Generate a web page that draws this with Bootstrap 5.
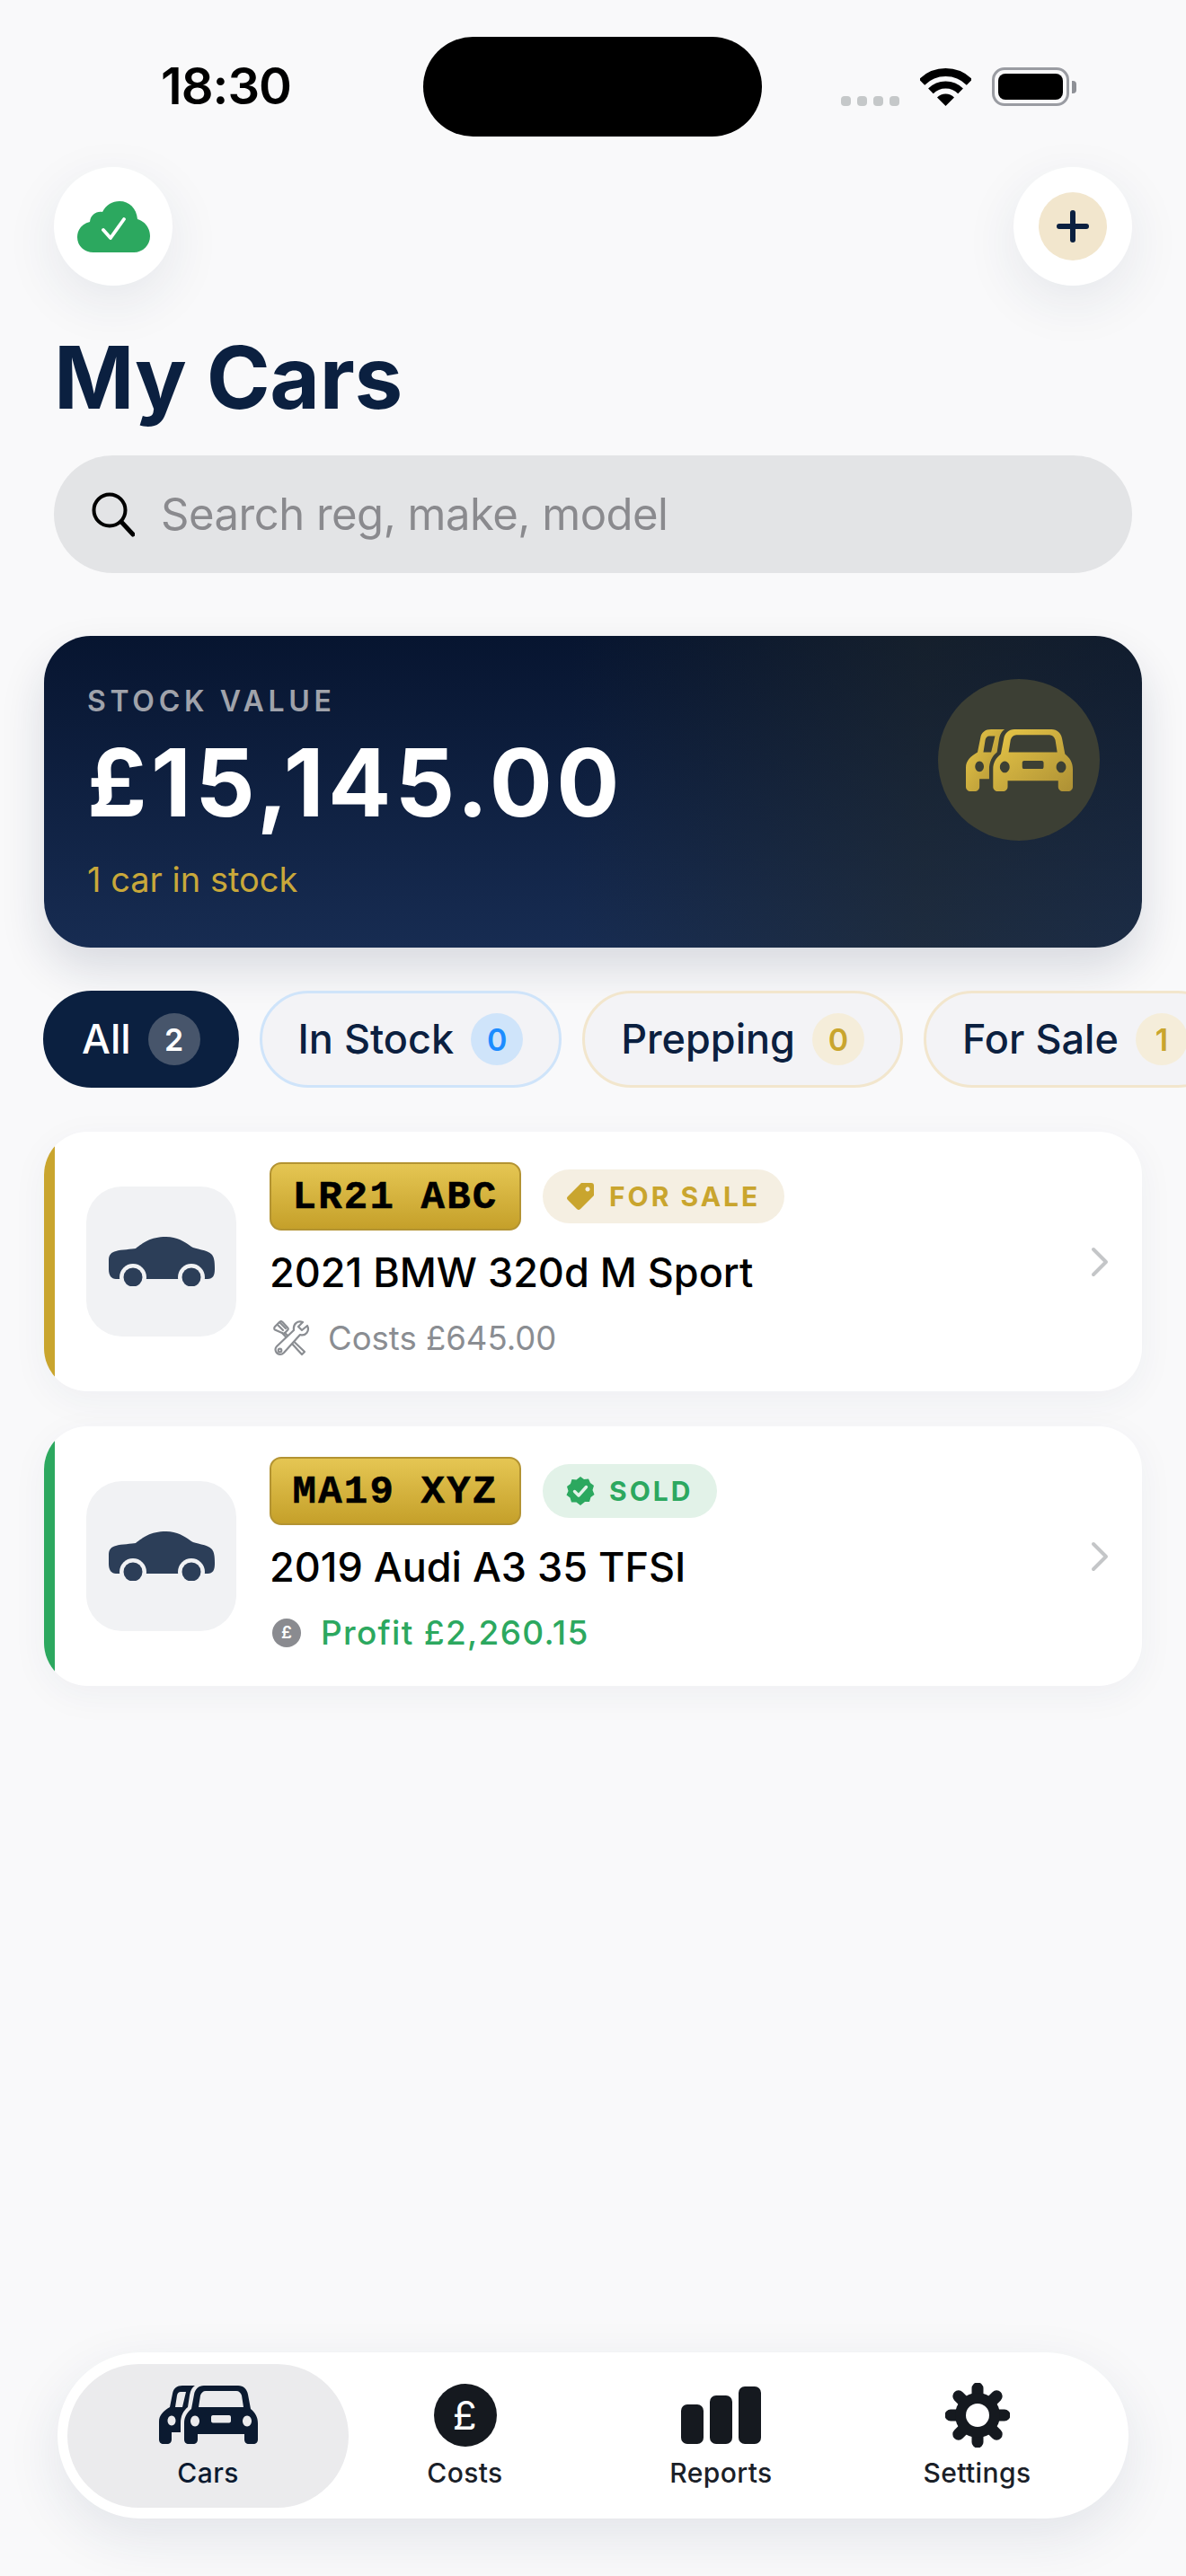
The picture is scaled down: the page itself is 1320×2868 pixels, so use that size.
<!DOCTYPE html>
<html lang="en">
<head>
    <meta charset="UTF-8">
    <meta name="viewport" content="width=device-width, initial-scale=1.0">
    <title>My Cars</title>
    <link rel="stylesheet" href="https://cdn.jsdelivr.net/npm/bootstrap@5.3.0/dist/css/bootstrap.min.css">
    <style>
        body {
            background-color: #f9f9fa;
            font-family: Inter, "Liberation Sans", sans-serif;
            color: #0b2040;
        }
        .app-shell { min-height: 2868px; overflow: hidden; }

        /* status bar */
        .status-row { padding: 41px 122px 0 179px; height: 152px; }
        .status-time { width: 292px; font-size: 56px; font-weight: 600; color: #000; line-height: 111px; letter-spacing: -1px; }
        .status-island { width: 377px; height: 111px; background: #000; border-radius: 56px; }
        .status-right { height: 77px; gap: 23px; }
        .signal-dots { gap: 7px; }
        .signal-dots span { width: 11px; height: 11px; border-radius: 4px; background: #c5c8c9; }
        .batt-shell { width: 86px; height: 43px; border: 3px solid #9a9ca2; border-radius: 14px; padding: 4px; }
        .batt-fill { height: 100%; background: #000; border-radius: 8px; }
        .batt-nub { width: 5px; height: 14px; background: #8e9096; border-radius: 0 4px 4px 0; margin-left: 3px; }

        /* header */
        .top-row { margin-top: 34px; padding: 0 60px; }
        .round-btn { width: 132px; height: 132px; background: #fff; box-shadow: 0 18px 60px rgba(30, 50, 90, .09); }
        .plus-disc { width: 76px; height: 76px; background: #f2e6cd; }
        .page-title { margin: 52px 0 37px; padding-left: 60px; font-size: 96px; line-height: 100px; font-weight: 700; letter-spacing: -.4px; color: #0b2040; }
        .search-box { margin: 0 60px; height: 131px; background: #e3e4e6; padding-left: 42px; gap: 29px; }
        .search-text { font-size: 49px; color: #8a8a8e; letter-spacing: -.5px; }

        /* stock value */
        .hero-panel {
            margin: 70px 49px 0;
            height: 347px;
            padding: 53px 47px 0 48px;
            border-radius: 52px;
            color: #fff;
            background:
                linear-gradient(90deg, rgba(38, 44, 40, 0) 48%, rgba(38, 44, 40, .45) 80%, rgba(38, 44, 40, .3) 100%),
                linear-gradient(180deg, #071530 0%, #172c52 100%);
            box-shadow: 0 24px 50px rgba(20, 35, 70, .14);
        }
        .hero-label { font-size: 32px; line-height: 40px; font-weight: 600; letter-spacing: 4.700px; color: #a0a3ab; }
        .hero-amount { margin-top: 15px; font-size: 104px; line-height: 110px; font-weight: 700; letter-spacing: 4.500px; }
        .hero-sub { margin-top: 30px; font-size: 38px; line-height: 46px; color: #c9a83a; }
        .hero-disc { width: 180px; height: 180px; margin-top: -5px; background: #3c3f34; }

        /* filter chips */
        .chip-row { margin: 48px 0 0 48px; gap: 23px; }
        .chip-item { height: 108px; padding: 0 40px; gap: 19px; background: #f3f3f6; border: 3px solid #f2e6cd; font-size: 45px; font-weight: 500; color: #0b2040; white-space: nowrap; }
        .chip-item.chip-all { background: #0b2040; border-color: #0b2040; color: #fff; }
        .chip-item.chip-blue { border-color: #cfe4fa; }
        .chip-num { width: 58px; height: 58px; font-size: 34px; font-weight: 600; background: #f5edda; color: #c9a52e; }
        .chip-all .chip-num { background: #47556b; color: #fff; }
        .chip-blue .chip-num { background: #cfe4fa; color: #1c8cff; }

        /* car rows */
        .car-list { margin: 49px 49px 0; gap: 39px; }
        .car-item { height: 289px; border: 0; border-radius: 48px; background: #fff; padding-right: 37px; box-shadow: 0 10px 40px rgba(30, 50, 90, .05); overflow: hidden; }
        .car-strip { width: 12px; align-self: stretch; flex-shrink: 0; margin-right: 35px; }
        .strip-gold { background: #c9a52e; }
        .strip-green { background: #2ca85f; }
        .car-thumb { width: 167px; height: 167px; background: #f1f2f4; border-radius: 40px; }
        .car-body { padding-top: 34px; margin-left: 37px; align-self: flex-start; }
        .plate-tag { width: 280px; height: 76px; padding-top: 2px; border: 2px solid #b39332; border-radius: 13px; background: linear-gradient(180deg, #e5c653 0%, #c5a02a 100%); font-family: "Liberation Mono", monospace; font-size: 44px; font-weight: 700; letter-spacing: 2.200px; color: #000; -webkit-text-stroke: .6px #000; }
        .state-tag { height: 60px; margin-left: 24px; padding: 0 27px 0 26px; gap: 16px; font-size: 30px; font-weight: 700; letter-spacing: 3px; }
        .state-sale { background: #f5efe2; color: #c9a52e; }
        .state-sold { background: #e2f2e8; color: #2ca85f; }
        .car-name { margin-top: 24px; font-size: 45px; line-height: 46px; font-weight: 500; color: #000; }
        .car-meta { margin-top: 30px; padding-left: 3px; height: 40px; gap: 20px; font-size: 36.500px; color: #8a8d92; }
        .car-meta.meta-profit { gap: 22px; font-size: 37px; color: #2ca85f; font-weight: 500; letter-spacing: 1.300px; }
        .coin-small { width: 32px; height: 32px; background: #8a8b90; color: #fff; font-size: 19px; font-weight: 600; letter-spacing: 0; }

        /* tab bar */
        .tab-bar { width: 1192px; height: 185px; margin: auto 64px 64px; padding: 0 26px 0 27px; background: #fff; box-shadow: 0 20px 60px rgba(30, 50, 90, .1); }
        .tab-item { width: 285px; height: 160px; gap: 10px; font-size: 30px; line-height: 36px; font-weight: 500; letter-spacing: .4px; color: #1a2028; text-decoration: none; }
        .tab-item.tab-on { width: 313px; margin: 0 -13px 0 -16px; background: #ebebed; color: #0b1a30; }
        .tab-ico { height: 72px; }
        .coin-large { width: 70px; height: 70px; background: #15191f; color: #fff; font-size: 44px; font-weight: 400; }
        .bar-set { gap: 7px; height: 65px; }
        .bar-set span { width: 25px; background: #15191f; border-radius: 7px; }
    </style>
</head>
<body>

<svg width="0" height="0" class="d-block">
    <defs>
        <linearGradient id="goldFade" x1="0" y1="0" x2="1" y2="1">
            <stop offset="0" stop-color="#e8c747"/>
            <stop offset="1" stop-color="#ad9035"/>
        </linearGradient>
        <symbol id="twoCars" viewBox="0 0 110 65" preserveAspectRatio="none">
            <path d="M34 0H26C20 0 16 3 15 9L12 24C5 28 0 33 0 40V60C0 63 2 65 5 65H9C12 65 14 63 14 60V52H24V42C24 34 27 28 32 24L34 11C35 5 37 2 40 0ZM24 7H30L26 24H18L20 11C20.500 8.500 22 7 24 7ZM14 33.500A4.500 5.500 0 1 1 13.990 33.500Z" fill-rule="evenodd"/>
            <path d="M50 0H88C94 0 98 4 99 10L102 26C107 30 110 35 110 42V60C110 63 108 65 105 65H100C97 65 95 63 95 60V54H43V60C43 63 41 65 38 65H33C30 65 28 63 28 60V42C28 35 31 30 36 26L39 10C40 4 44 0 50 0ZM52 6C49 6 47 8 46 11L44 24H94L92 11C91 8 89 6 86 6ZM40 33.500A5 6 0 1 0 40.010 33.500ZM98 33.500A5 6 0 1 0 98.010 33.500ZM60 33C58.500 33 58 34 58 35.500V39C58 40.500 58.500 41.500 60 41.500H78C79.500 41.500 80 40.500 80 39V35.500C80 34 79.500 33 78 33Z" fill-rule="evenodd"/>
        </symbol>
        <symbol id="sideCar" viewBox="0 0 118 55">
            <path d="M8 16C14 14 26 14 30 13C38 7 46 0 64 0C76 0 84 5 92 11C96 14 110 14 115 20C117 23 118 26 118 36C118 43 116 47 110 47H8C3 47 0 43 0 36V26C0 20 3 17 8 16Z" fill="#2c3e58"/>
            <circle cx="27" cy="45" r="15" fill="#f1f2f4"/>
            <circle cx="92" cy="45" r="15" fill="#f1f2f4"/>
            <rect x="0" y="48" width="118" height="7" fill="#f1f2f4"/>
            <circle cx="27" cy="45" r="10.500" fill="#2c3e58"/>
            <circle cx="92" cy="45" r="10.500" fill="#2c3e58"/>
        </symbol>
        <symbol id="chevron" viewBox="0 0 20 34">
            <path d="M3 3L17 17L3 31" fill="none" stroke="#c4c6c8" stroke-width="4" stroke-linecap="round" stroke-linejoin="round"/>
        </symbol>
    </defs>
</svg>

<div class="app-shell d-flex flex-column">

    <div class="status-row d-flex align-items-start">
        <div class="status-time">18:30</div>
        <div class="status-island"></div>
        <div class="status-right ms-auto d-flex align-items-end">
            <div class="signal-dots d-flex">
                <span></span><span></span><span></span><span></span>
            </div>
            <svg width="57" height="42" viewBox="0 0 57 42">
                <path d="M2 15.500A37.500 37.500 0 0 1 55 15.500" fill="none" stroke="#000" stroke-width="9"/>
                <path d="M11.900 25.400A23.500 23.500 0 0 1 45.100 25.400" fill="none" stroke="#000" stroke-width="8"/>
                <path d="M28.500 42L19 32.500A13.400 13.400 0 0 1 38 32.500Z" fill="#000"/>
            </svg>
            <div class="d-flex align-items-center">
                <div class="batt-shell"><div class="batt-fill"></div></div>
                <div class="batt-nub"></div>
            </div>
        </div>
    </div>

    <div class="top-row d-flex justify-content-between">
        <div class="round-btn rounded-circle d-flex align-items-center justify-content-center">
            <svg width="81" height="57" viewBox="0 0 81 57">
                <path d="M18 57C8 57 0 50 0 40C0 31 6 25 14 23C15 15 21 11 28 12C32 4 39 0 47 0C58 0 66 8 67 20C75 22 81 30 81 39C81 49 73 57 63 57Z" fill="#2ca85f"/>
                <path d="M29 32L37 41L52 20" fill="none" stroke="#fff" stroke-width="3.800" stroke-linecap="round" stroke-linejoin="round"/>
            </svg>
        </div>
        <div class="round-btn rounded-circle d-flex align-items-center justify-content-center">
            <div class="plus-disc rounded-circle d-flex align-items-center justify-content-center">
                <svg width="36" height="36" viewBox="0 0 36 36">
                    <path d="M18 3V33M3 18H33" stroke="#0b2040" stroke-width="6" stroke-linecap="round"/>
                </svg>
            </div>
        </div>
    </div>

    <h1 class="page-title">My Cars</h1>

    <div class="search-box rounded-pill d-flex align-items-center">
        <svg width="48" height="50" viewBox="0 0 48 50">
            <circle cx="20" cy="20" r="17.500" fill="none" stroke="#000" stroke-width="4"/>
            <path d="M33 33L46 47" stroke="#000" stroke-width="5" stroke-linecap="round"/>
        </svg>
        <span class="search-text">Search reg, make, model</span>
    </div>

    <div class="hero-panel d-flex justify-content-between">
        <div>
            <div class="hero-label">STOCK VALUE</div>
            <div class="hero-amount">£15,145.00</div>
            <div class="hero-sub">1 car in stock</div>
        </div>
        <div class="hero-disc rounded-circle d-flex align-items-center justify-content-center">
            <svg width="119" height="69" fill="url(#goldFade)"><use href="#twoCars"/></svg>
        </div>
    </div>

    <div class="chip-row d-flex flex-nowrap">
        <div class="chip-item chip-all rounded-pill d-flex align-items-center flex-shrink-0">All <span class="chip-num rounded-circle d-flex align-items-center justify-content-center">2</span></div>
        <div class="chip-item chip-blue rounded-pill d-flex align-items-center flex-shrink-0">In Stock <span class="chip-num rounded-circle d-flex align-items-center justify-content-center">0</span></div>
        <div class="chip-item rounded-pill d-flex align-items-center flex-shrink-0">Prepping <span class="chip-num rounded-circle d-flex align-items-center justify-content-center">0</span></div>
        <div class="chip-item rounded-pill d-flex align-items-center flex-shrink-0">For Sale <span class="chip-num rounded-circle d-flex align-items-center justify-content-center">1</span></div>
    </div>

    <div class="car-list d-flex flex-column">
        <div class="car-item card flex-row align-items-center">
            <div class="car-strip strip-gold"></div>
            <div class="car-thumb d-flex align-items-center justify-content-center flex-shrink-0">
                <svg width="118" height="55"><use href="#sideCar"/></svg>
            </div>
            <div class="car-body">
                <div class="d-flex align-items-center">
                    <div class="plate-tag d-flex align-items-center justify-content-center">LR21 ABC</div>
                    <div class="state-tag state-sale rounded-pill d-flex align-items-center">
                        <svg width="32" height="32" viewBox="0 0 32 32">
                            <path fill-rule="evenodd" d="M17 1H28A3 3 0 0 1 31 4V15L16 30A2.800 2.800 0 0 1 12 30L2 20A2.800 2.800 0 0 1 2 16ZM24 5.500A2.500 2.500 0 1 0 24.010 5.500Z" fill="#c9a52e"/>
                        </svg>
                        <span>FOR SALE</span>
                    </div>
                </div>
                <div class="car-name">2021 BMW 320d M Sport</div>
                <div class="car-meta d-flex align-items-center">
                    <svg width="42" height="40" viewBox="0 0 42 40" fill="none" stroke="#8a8d92" stroke-width="2.200" stroke-linejoin="round" stroke-linecap="round">
                        <path d="M3 7L8 2C9 1 10.500 1 11.500 2L17 8C18 9 18 10 17 11L14 14C13 15 12 15 11 14L3 10.500C2 10 2 8 3 7Z"/>
                        <path d="M14 14L36 35L33 38L11 14"/>
                        <path d="M6 5L12 11M9 3L15 9"/>
                        <path d="M39 6L33 11L29 7L34 2C28 0 23 4 24 11L5 29C2 32 4 38 9 38C11 38 12 37 13 36L31 16C37 18 42 12 39 6Z" fill="#fff"/>
                        <circle cx="8.500" cy="33.500" r="1.800"/>
                    </svg>
                    <span>Costs £645.00</span>
                </div>
            </div>
            <svg class="ms-auto flex-shrink-0" width="20" height="34"><use href="#chevron"/></svg>
        </div>

        <div class="car-item card flex-row align-items-center">
            <div class="car-strip strip-green"></div>
            <div class="car-thumb d-flex align-items-center justify-content-center flex-shrink-0">
                <svg width="118" height="55"><use href="#sideCar"/></svg>
            </div>
            <div class="car-body">
                <div class="d-flex align-items-center">
                    <div class="plate-tag d-flex align-items-center justify-content-center">MA19 XYZ</div>
                    <div class="state-tag state-sold rounded-pill d-flex align-items-center">
                        <svg width="32" height="32" viewBox="0 0 32 32">
                            <path d="M16 0L20 3L25 2.500L27 7L31 10L29.500 15L31.500 20L27.500 23L26 28L21 28L16 32L11.500 28.500L6 28.500L4.500 23.500L.5 20.500L2.500 16L1 11L5 8L6.500 3L11.500 3.500Z" fill="#2ca85f"/>
                            <path d="M9.500 16.500L14 21L22.500 11.500" fill="none" stroke="#e2f2e8" stroke-width="3.400" stroke-linecap="round" stroke-linejoin="round"/>
                        </svg>
                        <span>SOLD</span>
                    </div>
                </div>
                <div class="car-name">2019 Audi A3 35 TFSI</div>
                <div class="car-meta meta-profit d-flex align-items-center">
                    <div class="coin-small rounded-circle d-flex align-items-center justify-content-center">£</div>
                    <span>Profit £2,260.15</span>
                </div>
            </div>
            <svg class="ms-auto flex-shrink-0" width="20" height="34"><use href="#chevron"/></svg>
        </div>
    </div>

    <nav class="tab-bar rounded-pill d-flex align-items-center flex-nowrap">
        <a class="tab-item tab-on rounded-pill d-flex flex-column align-items-center justify-content-center" href="#">
            <div class="tab-ico d-flex align-items-center"><svg width="110" height="65" fill="#0b1a30"><use href="#twoCars"/></svg></div>
            <span>Cars</span>
        </a>
        <a class="tab-item d-flex flex-column align-items-center justify-content-center" href="#">
            <div class="tab-ico d-flex align-items-center"><div class="coin-large rounded-circle d-flex align-items-center justify-content-center">£</div></div>
            <span>Costs</span>
        </a>
        <a class="tab-item d-flex flex-column align-items-center justify-content-center" href="#">
            <div class="tab-ico d-flex align-items-center">
                <div class="bar-set d-flex align-items-end">
                    <span style="height: 44px"></span>
                    <span style="height: 54px"></span>
                    <span style="height: 64px"></span>
                </div>
            </div>
            <span>Reports</span>
        </a>
        <a class="tab-item d-flex flex-column align-items-center justify-content-center" href="#">
            <div class="tab-ico d-flex align-items-center">
                <svg width="72" height="72" viewBox="0 0 72 72">
                    <g stroke="#15191f" stroke-width="13" stroke-linecap="round">
                        <path d="M36 6V66M6 36H66M14.800 14.800L57.200 57.200M57.200 14.800L14.800 57.200"/>
                    </g>
                    <circle cx="36" cy="36" r="25" fill="#15191f"/>
                    <circle cx="36" cy="36" r="13" fill="#fff"/>
                </svg>
            </div>
            <span>Settings</span>
        </a>
    </nav>
</div>

<script src="https://cdn.jsdelivr.net/npm/bootstrap@5.3.0/dist/js/bootstrap.bundle.min.js"></script>
</body>
</html>
